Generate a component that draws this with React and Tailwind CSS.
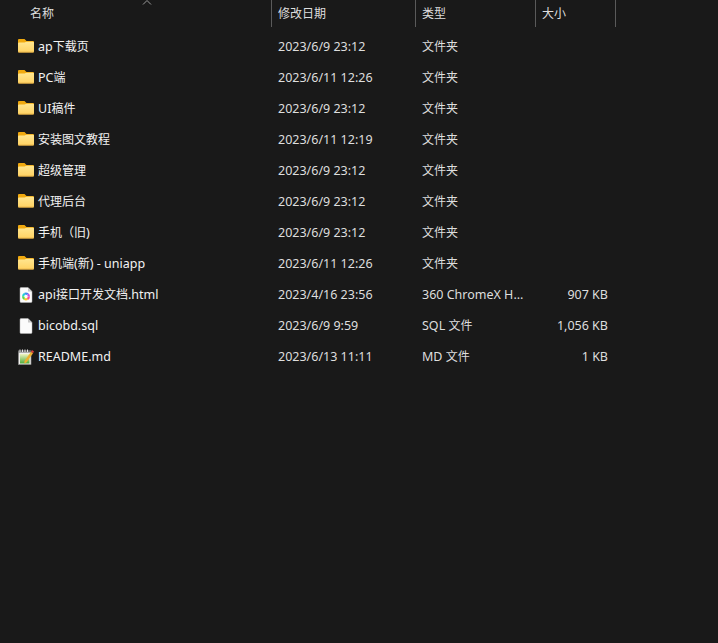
const rows = [
  { name: "ap下载页", date: "2023/6/9 23:12", type: "文件夹", icon: "folder" },
  { name: "PC端", date: "2023/6/11 12:26", type: "文件夹", icon: "folder" },
  { name: "UI稿件", date: "2023/6/9 23:12", type: "文件夹", icon: "folder" },
  { name: "安装图文教程", date: "2023/6/11 12:19", type: "文件夹", icon: "folder" },
  { name: "超级管理", date: "2023/6/9 23:12", type: "文件夹", icon: "folder" },
  { name: "代理后台", date: "2023/6/9 23:12", type: "文件夹", icon: "folder" },
  { name: "手机（旧)", date: "2023/6/9 23:12", type: "文件夹", icon: "folder" },
  { name: "手机端(新) - uniapp", date: "2023/6/11 12:26", type: "文件夹", icon: "folder" },
  { name: "api接口开发文档.html", date: "2023/4/16 23:56", type: "360 ChromeX H...", size: "907 KB", icon: "html" },
  { name: "bicobd.sql", date: "2023/6/9 9:59", type: "SQL 文件", size: "1,056 KB", icon: "file" },
  { name: "README.md", date: "2023/6/13 11:11", type: "MD 文件", size: "1 KB", icon: "md" },
];

const ringColors = ["#ff4f8b", "#ffc928", "#5fd84a", "#25d0d8", "#3f8cf0", "#c050e8"];

// CJK runs sit at 12px, latin at 12.5px, to get both widths right
function Txt({ children }) {
  return children.split(/([\u4e00-\u9fff（）]+)/).map((part, i) =>
    i % 2 ? <span key={i} className="text-[12px]">{part}</span> : part
  );
}

function FolderIcon() {
  return (
    <svg width="16" height="14" viewBox="0 0 16 14" className="mb-[3px] shrink-0">
      <defs>
        <linearGradient id="folderBody" x1="0" y1="0" x2="0" y2="1">
          <stop offset="0" stopColor="#ffe690" />
          <stop offset="1" stopColor="#ffd262" />
        </linearGradient>
      </defs>
      <path d="M0 1 Q0 0 1 0 H6.5 L8.5 2 H15 Q16 2 16 3 V6 H0 Z" fill="#f0a90f" />
      <path d="M0 4.5 Q0 3.5 1 3.5 H6.5 L8.5 2.8 H15 Q16 2.8 16 3.8 V12.5 Q16 13.5 15 13.5 H1 Q0 13.5 0 12.5 Z" fill="url(#folderBody)" />
      <path d="M0 12.7 H16 V12.8 Q16 13.5 15 13.5 H1 Q0 13.5 0 12.8 Z" fill="#d9a13a" />
    </svg>
  );
}

function PageIcon({ children }) {
  return (
    <svg width="16" height="16" viewBox="0 0 16 16" className="mb-[1px] shrink-0">
      <path d="M3 0.5 H10 L14 4.5 V14.5 Q14 15.5 13 15.5 H3 Q2 15.5 2 14.5 V1.5 Q2 0.5 3 0.5 Z" fill="#fbfbfb" stroke="#b4b4b4" strokeWidth="0.5" />
      <path d="M10 0.5 V4.5 H14 Z" fill="#c8c8c8" />
      {children}
    </svg>
  );
}

function HtmlIcon() {
  return (
    <PageIcon>
      {ringColors.map((c, i) => (
        <circle
          key={c}
          cx="8"
          cy="9.5"
          r="2.9"
          fill="none"
          stroke={c}
          strokeWidth="2.2"
          strokeDasharray="3.05 15.17"
          strokeDashoffset={-3.04 * i}
        />
      ))}
    </PageIcon>
  );
}

function MdIcon() {
  return (
    <svg width="16" height="16" viewBox="0 0 16 16" className="mb-[1px] shrink-0">
      <defs>
        <linearGradient id="mdFill" x1="0" y1="0" x2="0" y2="1">
          <stop offset="0" stopColor="#f0f4c0" />
          <stop offset="1" stopColor="#4fae3c" />
        </linearGradient>
      </defs>
      <rect x="0.5" y="2" width="12.5" height="13.5" fill="#f2f2ee" stroke="#8a8a8a" strokeWidth="0.7" />
      <rect x="0.5" y="1.5" width="12.5" height="2" fill="#6a6a6a" />
      <path d="M2 0.5 V3 M4.5 0.5 V3 M7 0.5 V3 M9.5 0.5 V3" stroke="#e4e4e4" strokeWidth="1" />
      <rect x="2" y="5" width="9.5" height="9.5" fill="url(#mdFill)" />
      <path d="M6.5 12 L13 2.8 L15 4.3 L8.5 13.5 L6.2 14.4 Z" fill="#eeb030" />
      <path d="M13 2.8 L14 1 L16 2.4 L15 4.3 Z" fill="#d8403c" />
    </svg>
  );
}

function RowIcon({ type }) {
  if (type === "folder") return <FolderIcon />;
  if (type === "html") return <HtmlIcon />;
  if (type === "md") return <MdIcon />;
  return <PageIcon />;
}

export default function App() {
  return (
    <div className="relative min-h-[643px] bg-[#191919] text-[12.5px] text-[#dedede] [font-family:'Noto_Sans','Noto_Sans_CJK_SC',sans-serif]">
      <svg width="10" height="5" viewBox="0 0 10 5" className="absolute left-[142px] top-0">
        <path d="M1 4.5 L5 0.5 L9 4.5" fill="none" stroke="#9a9a9a" strokeWidth="1" />
      </svg>

      <div className="grid h-[31px] grid-cols-[272px_144px_120px_80px] items-start text-[12px]">
        <div className="flex h-[27px] items-center border-r border-[#5a5a5a] pl-[30px]">名称</div>
        <div className="flex h-[27px] items-center border-r border-[#5a5a5a] pl-[6px]">修改日期</div>
        <div className="flex h-[27px] items-center border-r border-[#5a5a5a] pl-[6px]">类型</div>
        <div className="flex h-[27px] items-center border-r border-[#5a5a5a] pl-[6px]">大小</div>
      </div>

      {rows.map(r => (
        <div key={r.name} className="grid h-[31px] grid-cols-[272px_144px_120px_72px] items-center pt-[2px]">
          <div className="flex items-center gap-1 pl-[18px] text-[#f2f2f2]">
            <RowIcon type={r.icon} />
            <span><Txt>{r.name}</Txt></span>
          </div>
          <div className="pl-[6px]">{r.date}</div>
          <div className="pl-[6px]"><Txt>{r.type}</Txt></div>
          <div className="text-right">{r.size}</div>
        </div>
      ))}
    </div>
  );
}
